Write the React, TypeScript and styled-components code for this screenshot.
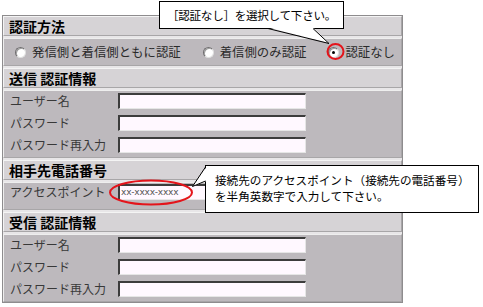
import React from 'react';
import styled, { createGlobalStyle } from 'styled-components';

const Global = createGlobalStyle`
  html, body { margin: 0; padding: 0; background: #ffffff; }
  body { font-family: "Noto Sans CJK JP", "Noto Sans", sans-serif; }
`;

const Stage = styled.div`
  position: relative;
  width: 483px;
  height: 307px;
  overflow: hidden;
  padding: 15px 0 0 2px;
  box-sizing: border-box;
`;

const Panel = styled.div`
  width: 401px;
  box-sizing: border-box;
  border: 1px solid #8e8c8e;
  background: #e8e6e8;
  display: flex;
  flex-direction: column;
  gap: 2px;
`;

const SectionHeader = styled.div`
  height: 20px;
  box-sizing: border-box;
  border: 1px solid;
  border-color: #f4f4f4 #a8a6a8 #a8a6a8 #f4f4f4;
  background: #d6d3d6;
  font-size: 14px;
  font-weight: 700;
  line-height: 18px;
  padding-left: 5px;
  color: #000;
  white-space: nowrap;
`;

const SectionBody = styled.div<{ $h: number }>`
  height: ${(p) => p.$h}px;
  box-sizing: border-box;
  border: 1px solid;
  border-color: #eeeeee #a8a6a8 #a8a6a8 #eeeeee;
  background: #bdb9bd;
  display: flex;
  flex-direction: column;
`;

const RadioRow = styled.div`
  display: flex;
  align-items: center;
  height: 100%;
  padding-left: 11px;
  gap: 22px;
`;

const RadioOption = styled.label`
  display: flex;
  align-items: center;
  gap: 6px;
  font-size: 12.4px;
  color: #2a2a2a;
  white-space: nowrap;
`;

const RadioDot = styled.span<{ $checked?: boolean }>`
  position: relative;
  width: 11px;
  height: 11px;
  box-sizing: border-box;
  border-radius: 50%;
  background: #ffffff;
  border: 1px solid;
  border-color: #6e6c6e #e0e0e0 #e0e0e0 #6e6c6e;
  box-shadow: inset 1px 1px 0 #a0a0a0;
  &::after {
    content: '';
    display: ${(p) => (p.$checked ? 'block' : 'none')};
    position: absolute;
    left: 3px;
    top: 3px;
    width: 3px;
    height: 3px;
    border-radius: 50%;
    background: #000;
  }
`;

const FieldRow = styled.div<{ $h?: number; $top?: number }>`
  display: flex;
  align-items: flex-start;
  height: ${(p) => p.$h ?? 22}px;
  padding-top: ${(p) => p.$top ?? 2}px;
  box-sizing: border-box;
`;

const FieldLabel = styled.span`
  width: 114px;
  box-sizing: border-box;
  padding-left: 6px;
  font-size: 12px;
  line-height: 16px;
  color: #383838;
  white-space: nowrap;
`;

const TextBox = styled.div`
  width: 188px;
  height: 16px;
  box-sizing: border-box;
  border-style: solid;
  border-width: 2px 1px 1px 2px;
  border-color: #3c3c3c #e6e6e6 #e6e6e6 #3c3c3c;
  background: #fff8ff;
  font-family: "DejaVu Sans", sans-serif;
  font-size: 9px;
  line-height: 13px;
  color: #555;
  padding-left: 1px;
  letter-spacing: -0.2px;
`;

const Callout = styled.div<{ $x: number; $y: number; $w: number; $h: number }>`
  position: absolute;
  left: ${(p) => p.$x}px;
  top: ${(p) => p.$y}px;
  width: ${(p) => p.$w}px;
  height: ${(p) => p.$h}px;
  box-sizing: border-box;
  border: 1px solid #000;
  background: #fff;
  color: #000;
  white-space: nowrap;
`;

const CalloutTop = styled(Callout)`
  font-size: 11.6px;
  line-height: 26px;
  text-align: center;
  letter-spacing: -0.3px;
`;

const CalloutSide = styled(Callout)`
  font-size: 11.6px;
  line-height: 16px;
  padding: 6px 0 0 9px;
`;

const Overlay = styled.svg`
  position: absolute;
  left: 0;
  top: 0;
  pointer-events: none;
`;

function Fields({ labels }: { labels: string[] }) {
  return (
    <>
      {labels.map((l) => (
        <FieldRow key={l}>
          <FieldLabel>{l}</FieldLabel>
          <TextBox />
        </FieldRow>
      ))}
    </>
  );
}

const authLabels = ['ユーザー名', 'パスワード', 'パスワード再入力'];

export default function App() {
  return (
    <>
      <Global />
      <Stage>
        <Panel>
          <SectionHeader>認証方法</SectionHeader>
          <SectionBody $h={28}>
            <RadioRow>
              <RadioOption>
                <RadioDot />
                発信側と着信側ともに認証
              </RadioOption>
              <RadioOption>
                <RadioDot />
                着信側のみ認証
              </RadioOption>
              <RadioOption>
                <RadioDot $checked />
                認証なし
              </RadioOption>
            </RadioRow>
          </SectionBody>
          <SectionHeader>送信 認証情報</SectionHeader>
          <SectionBody $h={68}>
            <Fields labels={authLabels} />
          </SectionBody>
          <SectionHeader>相手先電話番号</SectionHeader>
          <SectionBody $h={28}>
            <FieldRow $h={26} $top={1}>
              <FieldLabel>アクセスポイント</FieldLabel>
              <TextBox>xx-xxxx-xxxx</TextBox>
            </FieldRow>
          </SectionBody>
          <SectionHeader>受信 認証情報</SectionHeader>
          <SectionBody $h={68}>
            <Fields labels={authLabels} />
          </SectionBody>
        </Panel>

        <CalloutTop $x={159} $y={1} $w={185} $h={28}>
          ［認証なし］を選択して下さい。
        </CalloutTop>
        <CalloutSide $x={205} $y={165} $w={274} $h={48}>
          接続先のアクセスポイント（接続先の電話番号）
          <br />
          を半角英数字で入力して下さい。
        </CalloutSide>

        <Overlay width={483} height={307} viewBox="0 0 483 307">
          <polygon points="268,27.5 313,27.5 329,43" fill="#fff" />
          <polyline points="268,28.5 329,43.5 313,28.5" fill="none" stroke="#000" strokeWidth={1} />
          <polygon points="206.5,167 192,187 206.5,181" fill="#fff" />
          <polyline points="205.5,167 192.5,186.5 205.5,181" fill="none" stroke="#000" strokeWidth={1} />
          <ellipse cx={335.5} cy={51.5} rx={8} ry={7.5} fill="none" stroke="#e4141b" strokeWidth={2} />
          <ellipse cx={151} cy={192.5} rx={41} ry={12} fill="none" stroke="#e4141b" strokeWidth={2} />
        </Overlay>
      </Stage>
    </>
  );
}
